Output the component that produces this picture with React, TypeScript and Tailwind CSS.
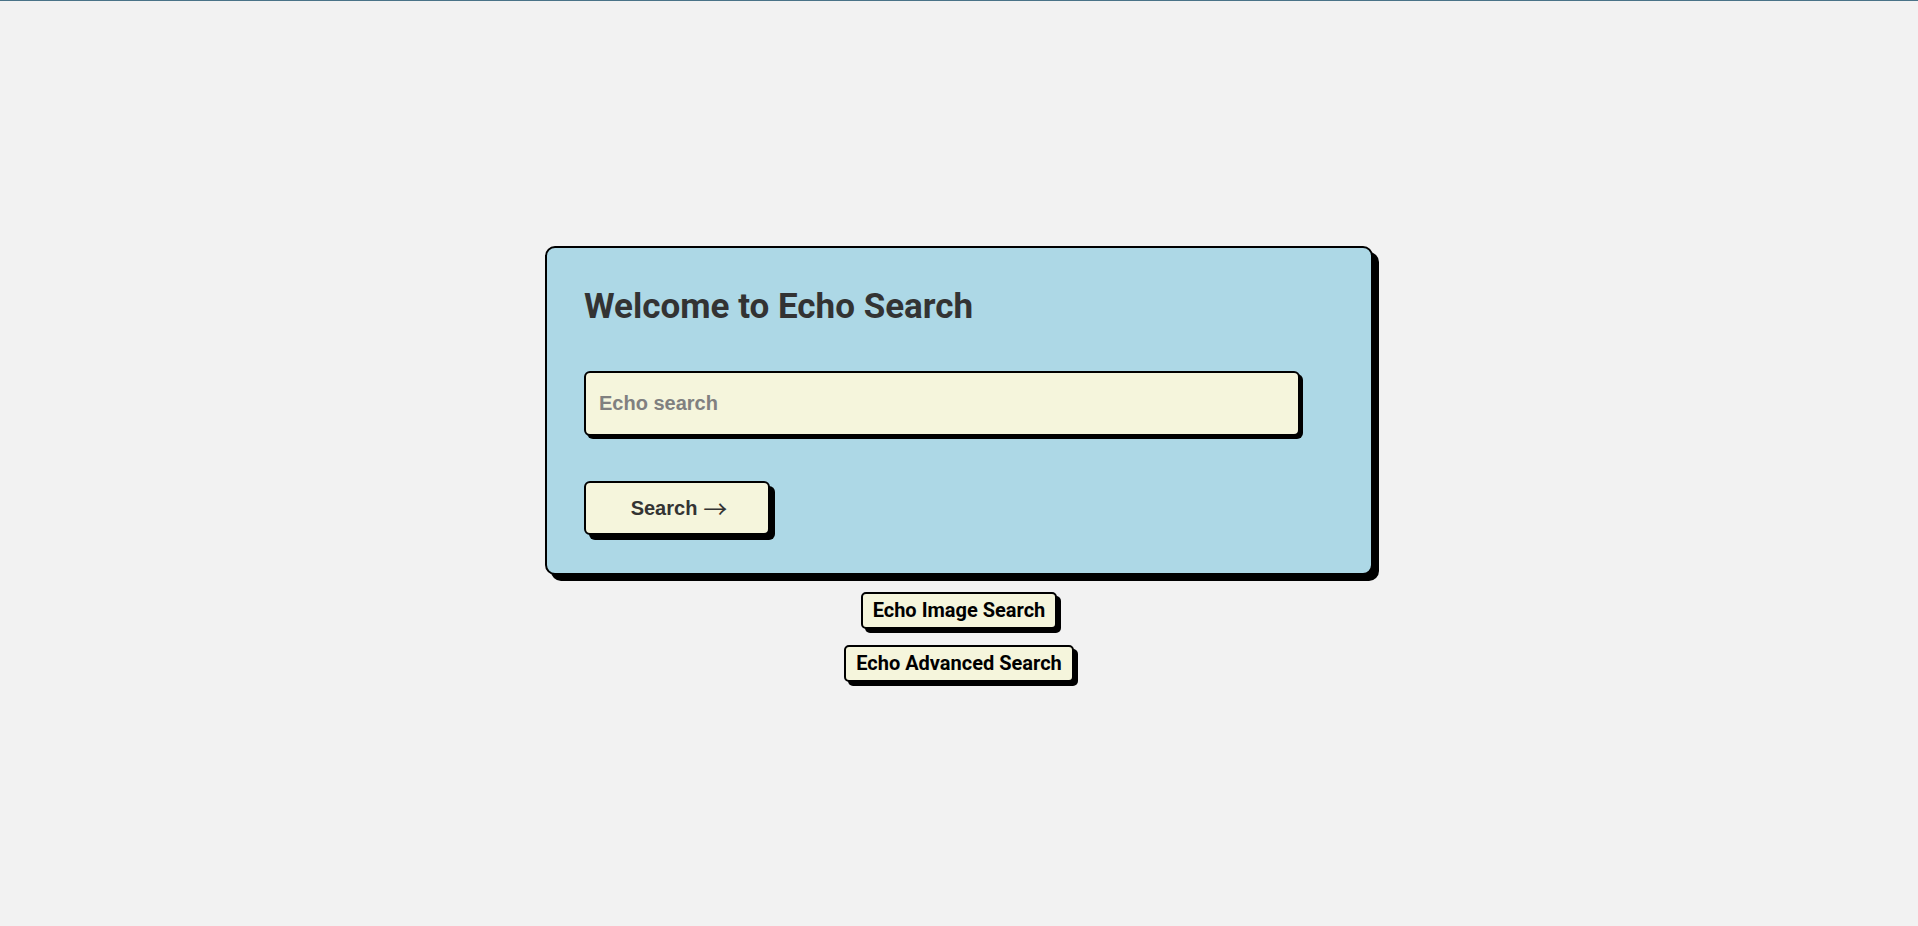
export default function App() {
  return (
    <div className="min-h-[926px] w-full bg-[#f2f2f2] border-t border-[#4a7388] flex flex-col items-center justify-center">
      <div className="w-[828px] rounded-[10px] border-2 border-black bg-[#add8e6] px-[37px] pt-[39px] pb-[38px] shadow-[6px_6px_0_#000]">
        <h1 className="font-['Roboto',sans-serif] font-bold text-[35px] leading-[40px] text-[#333]">
          Welcome to Echo Search
        </h1>
        <input
          type="text"
          placeholder="Echo search"
          className="mt-[44px] block w-[716px] h-[65px] rounded-[6px] border-2 border-black bg-[#f5f5dc] px-[13px] font-['Liberation_Sans',sans-serif] font-bold text-[20px] text-[#333] placeholder:text-[#808080] shadow-[3px_3px_0_#000] outline-none"
        />
        <button className="mt-[45px] flex items-center justify-center gap-[6px] pl-[4px] w-[186px] h-[54px] rounded-[6px] border-2 border-black bg-[#f5f5dc] font-['Liberation_Sans',sans-serif] font-bold text-[20px] text-[#333] shadow-[5px_5px_0_#000]">
          <span>Search</span>
          <span className="font-['Noto_Sans_CJK_JP',sans-serif] font-normal text-[24px] leading-none">→</span>
        </button>
      </div>
      <button className="mt-[17px] h-[37px] px-[10px] rounded-[5px] border-2 border-black bg-[#f5f5dc] font-['Roboto',sans-serif] font-bold text-[20px] leading-none text-black shadow-[4px_4px_0_#000]">
        Echo Image Search
      </button>
      <button className="mt-[16px] h-[37px] px-[10px] rounded-[5px] border-2 border-black bg-[#f5f5dc] font-['Roboto',sans-serif] font-bold text-[20px] leading-none text-black shadow-[4px_4px_0_#000]">
        Echo Advanced Search
      </button>
    </div>
  );
}
